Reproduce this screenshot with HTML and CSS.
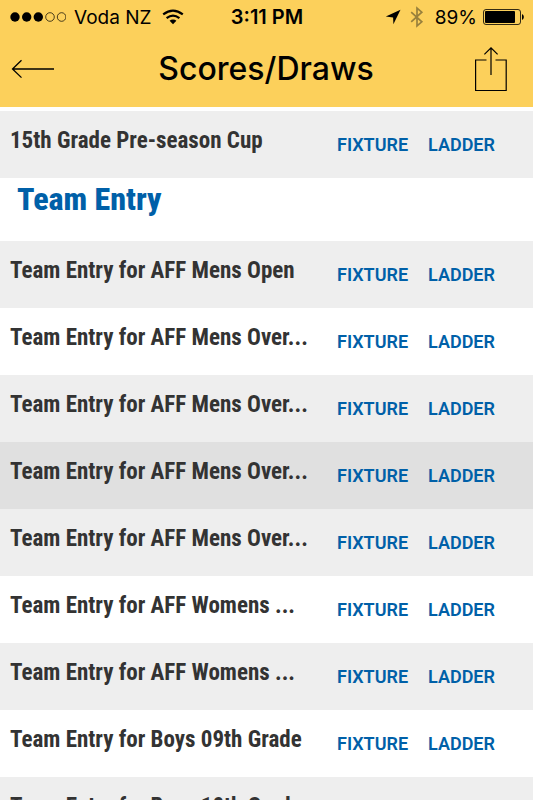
FILE: index.html
```html
<!DOCTYPE html>
<html lang="en">
<head>
    <meta charset="UTF-8">
    <meta name="viewport" content="width=device-width, initial-scale=1.0">
    <title>Scores/Draws</title>
    <link rel="stylesheet" href="styles.css">
</head>
<body>
    <header class="top">
        <div class="status-bar">
            <div class="status-left">
                <svg width="56" height="12" viewBox="0 0 56 12" aria-hidden="true">
                    <circle cx="5" cy="6" r="4.7"/>
                    <circle cx="16.7" cy="6" r="4.7"/>
                    <circle cx="28.3" cy="6" r="4.7"/>
                    <circle cx="40" cy="6" r="4.3" fill="none" stroke="#000" stroke-width=".7"/>
                    <circle cx="51.6" cy="6" r="4.3" fill="none" stroke="#000" stroke-width=".7"/>
                </svg>
                <span>Voda NZ</span>
                <svg class="wifi" width="22" height="16" viewBox="0 0 22 16" fill="none" stroke="#000" stroke-width="2.2" aria-hidden="true">
                    <path d="M1.2 5.4q9.8-7.6 19.6 0"/>
                    <path d="M4.6 9.2q6.4-5.2 12.8 0"/>
                    <path d="M11 15.3l-3.4-3.5a4.8 4.8 0 0 1 6.8 0z" fill="#000" stroke="none"/>
                </svg>
            </div>
            <div class="status-time">3:11 PM</div>
            <div class="status-right">
                <svg width="16" height="16" viewBox="0 0 16 16" aria-hidden="true">
                    <path d="M15.5.8L.8 7.6l7.3.8.3 6.9z"/>
                </svg>
                <svg class="bluetooth" width="14" height="22" viewBox="0 0 14 22" fill="none" stroke="#98803c" stroke-width="1.7" aria-hidden="true">
                    <path d="M1.2 6.2l10.6 9.6L7 20V2l4.8 4.2L1.2 15.8"/>
                </svg>
                <span>89%</span>
                <svg width="41" height="16" viewBox="0 0 41 16" aria-hidden="true">
                    <rect x=".5" y=".5" width="37" height="15" rx="2.5" fill="none" stroke="#000" stroke-width=".8"/>
                    <rect x="2" y="2" width="30" height="12" rx="1"/>
                    <path d="M39 5.2c2.4.4 2.4 5.2 0 5.6z"/>
                </svg>
            </div>
        </div>
        <div class="nav-bar">
            <button class="nav-button" type="button" aria-label="Back">
                <svg width="44" height="20" viewBox="0 0 44 20" fill="none" stroke="#000" stroke-width="1.3">
                    <path d="M43 10H1.5M10.5 1.2L1.5 10l9 8.6"/>
                </svg>
            </button>
            <h1>Scores/Draws</h1>
            <button class="nav-button share" type="button" aria-label="Share">
                <svg width="32" height="46" viewBox="0 0 32 46" fill="none" stroke="#000" stroke-width="1.2">
                    <path d="M11.5 14H.6v30.5h30.6V14H20.5"/>
                    <path d="M16 29V1.8M9.4 8.4L16 1.8l6.6 6.6"/>
                </svg>
            </button>
        </div>
    </header>

    <main>
        <ul class="grades">
            <li class="grade">
                <span class="name">15th Grade Pre-season Cup</span>
                <a href="#">FIXTURE</a>
                <a href="#">LADDER</a>
            </li>
        </ul>
        <h2>Team Entry</h2>
        <ul class="grades">
            <li class="grade">
                <span class="name">Team Entry for AFF Mens Open</span>
                <a href="#">FIXTURE</a>
                <a href="#">LADDER</a>
            </li>
            <li class="grade">
                <span class="name">Team Entry for AFF Mens Over...</span>
                <a href="#">FIXTURE</a>
                <a href="#">LADDER</a>
            </li>
            <li class="grade">
                <span class="name">Team Entry for AFF Mens Over...</span>
                <a href="#">FIXTURE</a>
                <a href="#">LADDER</a>
            </li>
            <li class="grade selected">
                <span class="name">Team Entry for AFF Mens Over...</span>
                <a href="#">FIXTURE</a>
                <a href="#">LADDER</a>
            </li>
            <li class="grade">
                <span class="name">Team Entry for AFF Mens Over...</span>
                <a href="#">FIXTURE</a>
                <a href="#">LADDER</a>
            </li>
            <li class="grade">
                <span class="name">Team Entry for AFF Womens ...</span>
                <a href="#">FIXTURE</a>
                <a href="#">LADDER</a>
            </li>
            <li class="grade">
                <span class="name">Team Entry for AFF Womens ...</span>
                <a href="#">FIXTURE</a>
                <a href="#">LADDER</a>
            </li>
            <li class="grade">
                <span class="name">Team Entry for Boys 09th Grade</span>
                <a href="#">FIXTURE</a>
                <a href="#">LADDER</a>
            </li>
            <li class="grade">
                <span class="name">Team Entry for Boys 10th Grade</span>
            </li>
        </ul>
    </main>
</body>
</html>
```

FILE: styles.css
```css
* {
    box-sizing: border-box;
}
body {
    margin: 0;
    height: 100vh;
    display: flex;
    flex-direction: column;
    overflow: hidden;
    background-color: #fff;
    color: #333;
    font-family: "Roboto Condensed", Roboto, sans-serif;
}
h1, h2, ul {
    margin: 0;
    padding: 0;
    font-weight: inherit;
}
.top {
    flex: none;
    background-color: #fcd05b;
    color: #000;
    font-family: Inter, "Liberation Sans", sans-serif;
}
.status-bar {
    display: grid;
    grid-template-columns: 1fr auto 1fr;
    align-items: center;
    height: 34px;
    padding: 0 9px 0 10px;
    font-size: 19px;
}
.status-left, .status-right {
    display: flex;
    align-items: center;
    gap: 8px;
}
.status-right {
    justify-content: flex-end;
    gap: 6px;
}
.wifi {
    margin-left: 3px;
}
.bluetooth {
    margin: 0 5px 0 3px;
}
.status-time {
    font-size: 20px;
    font-weight: 600;
}
.nav-bar {
    display: grid;
    grid-template-columns: 1fr auto 1fr;
    align-items: center;
    height: 73px;
    padding: 0 26px 4px 11px;
}
.nav-button {
    display: flex;
    justify-self: start;
    padding: 0;
    border: none;
    background: none;
    cursor: pointer;
}
.share {
    justify-self: end;
}
h1 {
    padding-left: 14px;
    font-size: 32px;
    font-weight: 500;
}
main {
    flex: 1;
    min-height: 0;
    padding-top: 4px;
    overflow: hidden;
}
.grades {
    list-style: none;
}
.grade {
    display: grid;
    grid-template-columns: 1fr 73px 69px;
    column-gap: 18px;
    align-items: center;
    height: 67px;
    padding: 0 36px 0 10px;
}
.grade:nth-child(odd) {
    background-color: #eee;
}
.grade.selected {
    background-color: #e0e0e0;
}
.name {
    padding-bottom: 8px;
    font-size: 23px;
    font-weight: 700;
    white-space: nowrap;
}
.grade a {
    color: #0060a8;
    font-family: Roboto, sans-serif;
    font-size: 18px;
    font-weight: 600;
    text-decoration: none;
}
h2 {
    height: 63px;
    padding: 0 17px;
    color: #0060a8;
    font-size: 32px;
    font-weight: 800;
    line-height: 42px;
}
```
